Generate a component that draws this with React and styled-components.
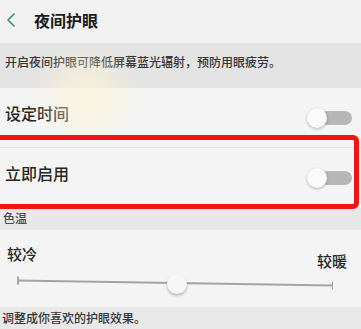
import styled, { createGlobalStyle } from "styled-components";

const GlobalStyle = createGlobalStyle`
  html, body {
    margin: 0;
    padding: 0;
    background: #f3f3f3;
  }
  body {
    font-family: "Noto Sans CJK SC", "Noto Sans", sans-serif;
  }
`;

const Screen = styled.div`
  position: relative;
  width: 361px;
  height: 329px;
  overflow: hidden;
  background: #f3f3f3;
  display: flex;
  flex-direction: column;
`;

const Header = styled.header`
  height: 43px;
  display: flex;
  align-items: center;
  padding: 0 0 3px 5px;
  box-sizing: border-box;
  background: #f1f1f1;
  h1 {
    margin: 0 0 0 17px;
    font-size: 16px;
    line-height: 20px;
    font-weight: 700;
    color: #1a1a1a;
  }
`;

const Notice = styled.p`
  margin: 0;
  height: 45px;
  box-sizing: border-box;
  padding: 12px 0 0 5px;
  background: #e3e3e3;
  font-size: 12px;
  line-height: 14px;
  font-weight: 500;
  color: #363636;
`;

const Row = styled.div`
  height: 60px;
  display: flex;
  align-items: center;
  justify-content: space-between;
  padding: 0 9px 0 5px;
  box-sizing: border-box;
  background: #f4f4f4;
  border-bottom: ${(p) => (p.$divider ? "1px solid #e1e1e1" : "none")};
`;

const RowLabel = styled.span`
  font-size: 16px;
  line-height: 20px;
  font-weight: 500;
  color: #262626;
  padding-bottom: 10px;
`;

const Switch = styled.div`
  position: relative;
  width: 45px;
  height: 20px;
  &::before {
    content: "";
    position: absolute;
    right: 0;
    top: 3px;
    width: 32px;
    height: 14px;
    border-radius: 7px;
    background: #b7b7b7;
  }
  &::after {
    content: "";
    position: absolute;
    left: 0;
    top: 0;
    width: 20px;
    height: 20px;
    border-radius: 50%;
    background: #fafafa;
    box-shadow: 0 1px 3px rgba(0, 0, 0, 0.28);
  }
`;

const SectionTitle = styled.div`
  height: 22px;
  box-sizing: border-box;
  padding: 3px 0 0 3px;
  background: #e7e7e7;
  font-size: 12px;
  line-height: 14px;
  font-weight: 500;
  color: #4a4a4a;
`;

const SliderPanel = styled.div`
  height: 77px;
  box-sizing: border-box;
  padding: 16px 14px 0 7px;
  background: #f4f4f4;
`;

const Ends = styled.div`
  display: flex;
  justify-content: space-between;
  align-items: flex-start;
`;

const EndLabel = styled.span`
  font-size: 15px;
  line-height: 16px;
  font-weight: 500;
  color: #262626;
  margin-top: ${(p) => p.$drop || 0}px;
`;

const Track = styled.div`
  position: relative;
  height: 20px;
  margin: 4px 14px 0 10px;
  transform: rotate(0.9deg);
  &::before {
    content: "";
    position: absolute;
    left: 0;
    right: 0;
    top: 9px;
    height: 1.5px;
    background: #a3a3a3;
  }
`;

const Tick = styled.span`
  position: absolute;
  top: 6px;
  ${(p) => (p.$side === "right" ? "right: 0;" : "left: 0;")}
  width: 1.5px;
  height: 8px;
  background: #a3a3a3;
`;

const Thumb = styled.span`
  position: absolute;
  left: 150px;
  top: 1px;
  width: 20px;
  height: 20px;
  border-radius: 50%;
  background: #f6f6f6;
  box-shadow: 0 2px 3px rgba(0, 0, 0, 0.25);
`;

const Footnote = styled.p`
  margin: 0;
  flex: 1;
  box-sizing: border-box;
  padding: 4px 0 0 2px;
  background: #e8e8e8;
  font-size: 12px;
  line-height: 14px;
  font-weight: 500;
  color: #363636;
`;

const Highlight = styled.div`
  position: absolute;
  left: -8px;
  right: 2px;
  top: 135px;
  height: 74px;
  box-sizing: border-box;
  border: 5px solid #f01414;
  border-radius: 6px;
  pointer-events: none;
`;

const Glare = styled.div`
  position: absolute;
  left: 30px;
  top: 40px;
  width: 110px;
  height: 110px;
  border-radius: 50%;
  background: radial-gradient(
    circle,
    rgba(255, 246, 215, 0.75) 0%,
    rgba(255, 244, 210, 0.35) 40%,
    rgba(255, 244, 210, 0) 70%
  );
  pointer-events: none;
`;

function Chevron() {
  return (
    <svg width="12" height="16" viewBox="0 0 12 16">
      <path
        d="M9 2 L3 8 L9 14"
        fill="none"
        stroke="#2f9a6c"
        strokeWidth="1.7"
        strokeLinecap="round"
        strokeLinejoin="round"
      />
    </svg>
  );
}

export default function App() {
  return (
    <>
      <GlobalStyle />
      <Screen>
        <Header>
          <Chevron />
          <h1>夜间护眼</h1>
        </Header>
        <Notice>开启夜间护眼可降低屏幕蓝光辐射，预防用眼疲劳。</Notice>
        <Row $divider>
          <RowLabel>设定时间</RowLabel>
          <Switch />
        </Row>
        <Row>
          <RowLabel>立即启用</RowLabel>
          <Switch />
        </Row>
        <SectionTitle>色温</SectionTitle>
        <SliderPanel>
          <Ends>
            <EndLabel>较冷</EndLabel>
            <EndLabel $drop={7}>较暖</EndLabel>
          </Ends>
          <Track>
            <Tick />
            <Tick $side="right" />
            <Thumb />
          </Track>
        </SliderPanel>
        <Footnote>调整成你喜欢的护眼效果。</Footnote>
        <Glare />
        <Highlight />
      </Screen>
    </>
  );
}
